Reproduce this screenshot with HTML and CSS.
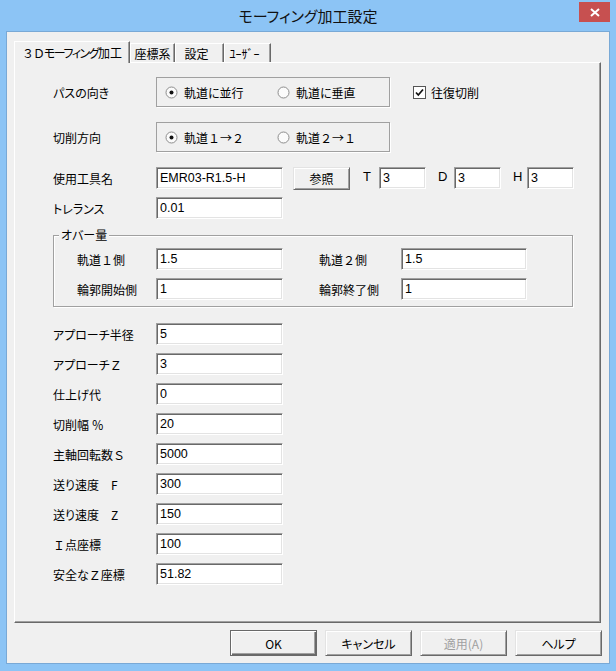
FILE: index.html
```html
<!DOCTYPE html>
<html lang="ja">
<head>
	<meta charset="UTF-8" />
	<title>モーフィング加工設定</title>
	<link rel="stylesheet" href="styles.css">
</head>
<body>
	<div class="window">
		<!-- タイトルバー -->
		<div class="titlebar">
			<span></span>
			<div class="title">モーフィング加工設定</div>
			<div class="close">
				<svg width="10" height="9" viewBox="0 0 10 9"><path d="M1 1L9 8M9 1L1 8" stroke="#fff" stroke-width="2" /></svg>
			</div>
		</div>
		<!-- END of タイトルバー -->
		<div class="client">
			<!-- タブ -->
			<div class="tabs">
				<div class="tab active tab-3d"><span class="fw tight">３Ｄ</span><span class="tighter">モーフィング</span>加工</div>
				<div class="tab tab-coord">座標系</div>
				<div class="tab tab-set">設定</div>
				<div class="tab tab-user">ﾕｰｻﾞｰ</div>
			</div>
			<!-- END of タブ -->
			<div class="panel">
				<div class="row-radio">
					<span class="label">パスの向き</span>
					<div class="radio-box">
						<span class="radio">
							<svg width="13" height="13" viewBox="0 0 13 13"><circle cx="6.5" cy="6.5" r="5.5" fill="#fbfbfb" stroke="#8d8d8d" /><circle cx="6.5" cy="6.5" r="2" fill="#111" /></svg>
							軌道に並行
						</span>
						<span class="radio">
							<svg width="13" height="13" viewBox="0 0 13 13"><circle cx="6.5" cy="6.5" r="5.5" fill="#fbfbfb" stroke="#8d8d8d" /></svg>
							軌道に垂直
						</span>
					</div>
					<span class="check">
						<svg width="13" height="13" viewBox="0 0 13 13"><rect x="0.5" y="0.5" width="12" height="12" fill="#fff" stroke="#555" /><path d="M3 6.5L5.3 9L10 3.5" fill="none" stroke="#111" stroke-width="1.7" /></svg>
						往復切削
					</span>
				</div>
				<div class="row-radio">
					<span class="label">切削方向</span>
					<div class="radio-box">
						<span class="radio">
							<svg width="13" height="13" viewBox="0 0 13 13"><circle cx="6.5" cy="6.5" r="5.5" fill="#fbfbfb" stroke="#8d8d8d" /><circle cx="6.5" cy="6.5" r="2" fill="#111" /></svg>
							<span>軌道<span class="fw">１→２</span></span>
						</span>
						<span class="radio">
							<svg width="13" height="13" viewBox="0 0 13 13"><circle cx="6.5" cy="6.5" r="5.5" fill="#fbfbfb" stroke="#8d8d8d" /></svg>
							<span>軌道<span class="fw">２→１</span></span>
						</span>
					</div>
				</div>

				<div class="row">
					<span class="label">使用工具名</span>
					<input type="text" class="field" value="EMR03-R1.5-H" />
					<button class="btn btn-ref">参照</button>
					<span class="axis">T</span>
					<input type="text" class="field field-s" value="3" />
					<span class="axis axis-d">D</span>
					<input type="text" class="field field-s" value="3" />
					<span class="axis axis-h">H</span>
					<input type="text" class="field field-s" value="3" />
				</div>
				<div class="row">
					<span class="label">トレランス</span>
					<input type="text" class="field" value="0.01" />
				</div>

				<!-- オバー量 -->
				<div class="group">
					<div class="group-title">オバー量</div>
					<div class="row">
						<span class="label-g">軌道<span class="fw">１</span>側</span>
						<input type="text" class="field" value="1.5" />
						<span class="label-g label-g2">軌道<span class="fw">２</span>側</span>
						<input type="text" class="field field-r" value="1.5" />
					</div>
					<div class="row row-last">
						<span class="label-g">輪郭開始側</span>
						<input type="text" class="field" value="1" />
						<span class="label-g label-g2">輪郭終了側</span>
						<input type="text" class="field field-r" value="1" />
					</div>
				</div>
				<!-- END of オバー量 -->

				<div class="row"><span class="label">アプローチ半径</span><input type="text" class="field" value="5" /></div>
				<div class="row"><span class="label">アプローチ<span class="fw">Ｚ</span></span><input type="text" class="field" value="3" /></div>
				<div class="row"><span class="label">仕上げ代</span><input type="text" class="field" value="0" /></div>
				<div class="row"><span class="label">切削幅 <span class="fw">％</span></span><input type="text" class="field" value="20" /></div>
				<div class="row"><span class="label">主軸回転数<span class="fw">Ｓ</span></span><input type="text" class="field" value="5000" /></div>
				<div class="row"><span class="label">送り速度<span class="fw">　</span>F</span><input type="text" class="field" value="300" /></div>
				<div class="row"><span class="label">送り速度<span class="fw">　</span>Z</span><input type="text" class="field" value="150" /></div>
				<div class="row"><span class="label"><span class="fw">Ｉ</span>点座標</span><input type="text" class="field" value="100" /></div>
				<div class="row"><span class="label">安全な<span class="fw">Ｚ</span>座標</span><input type="text" class="field" value="51.82" /></div>
			</div>
			<!-- ボタン -->
			<div class="buttons">
				<button class="btn btn-default">OK</button>
				<button class="btn">キャンセル</button>
				<button class="btn" disabled>適用(A)</button>
				<button class="btn">ヘルプ</button>
			</div>
		</div>
	</div>
</body>
</html>
```

FILE: styles.css
```css
html,
body {
	margin: 0;
	padding: 0;
}

* {
	box-sizing: border-box;
}

body {
	font-family: "Noto Sans CJK JP", "Liberation Sans", sans-serif;
	font-size: 12px;
	font-feature-settings: "palt";
	color: #000;
	background: #8cc4f5;
}

/* 全角英数字はプロポーショナルにしない */
.fw {
	font-feature-settings: normal;
}

.tight {
	letter-spacing: -1px;
}

.tighter {
	letter-spacing: -1.5px;
}

.window {
	width: 616px;
	height: 671px;
	padding: 0 6px 7px;
	background: #8cc4f5;
	display: flex;
	flex-direction: column;
}

/* タイトルバー */
.titlebar {
	height: 31px;
	flex: none;
	display: grid;
	grid-template-columns: 1fr auto 1fr;
	align-items: start;
}

.title {
	line-height: 31px;
	font-size: 15px;
	color: #111;
}

.close {
	justify-self: end;
	width: 31px;
	height: 20px;
	margin-top: 2px;
	background: #c75050;
	display: flex;
	align-items: center;
	justify-content: center;
}

.client {
	flex: 1;
	background: #f0f0f0;
	border: 1px solid #79a9d6;
	padding-top: 9px;
	display: flex;
	flex-direction: column;
}

/* タブ */
.tabs {
	display: flex;
	align-items: flex-end;
	height: 21px;
	margin-left: 7px;
	flex: none;
}

.tab {
	height: 19px;
	display: flex;
	align-items: center;
	justify-content: center;
	border-top: 1px solid #fff;
	border-left: 1px solid #fff;
	border-right: 1px solid #696969;
	box-shadow: inset -1px 0 0 #a0a0a0;
	background: #f0f0f0;
}

.tab.active {
	height: 22px;
	margin-bottom: -1px;
	position: relative;
	z-index: 1;
}

.tab-3d { width: 116px; }
.tab-coord { width: 45px; }
.tab-set { width: 49px; padding-right: 6px; }
.tab-user { width: 47px; padding-right: 6px; }

.panel {
	height: 561px;
	flex: none;
	margin: 0 8px 0 7px;
	border: 1px solid;
	border-color: #fff #696969 #696969 #fff;
	box-shadow: inset -1px -1px 0 #a0a0a0;
	padding: 14px 0 0 38px;
	display: flex;
	flex-direction: column;
}

.label {
	width: 103px;
	flex: none;
}

.row-radio {
	display: flex;
	align-items: center;
	height: 30px;
	margin-bottom: 15px;
}

.radio-box {
	display: flex;
	align-items: center;
	width: 234px;
	height: 30px;
	padding-left: 8px;
	border: 1px solid #a0a0a0;
	box-shadow: 1px 1px 0 #fff;
}

.radio {
	display: flex;
	align-items: center;
	width: 113px;
}

.radio svg {
	margin-right: 6px;
}

.check {
	display: flex;
	align-items: center;
	margin-left: 23px;
}

.check svg {
	margin-right: 5px;
}

.row {
	display: flex;
	align-items: center;
	height: 22px;
	margin-bottom: 8px;
}

.field {
	width: 127px;
	height: 22px;
	margin: 0;
	padding: 0 0 0 3px;
	border: 1px solid;
	border-color: #a0a0a0 #fff #fff #a0a0a0;
	box-shadow: inset 1px 1px 0 #696969, inset -1px -1px 0 #e3e3e3;
	background: #fff;
	font-family: "Liberation Sans", sans-serif;
	font-size: 12.5px;
	color: #000;
	outline: none;
}

.field-s {
	width: 47px;
}

.field-r {
	width: 126px;
}

.axis {
	width: 16px;
	margin-left: 13px;
	margin-top: -3px;
	font-family: "Liberation Sans", sans-serif;
	font-size: 13px;
}

.axis-d {
	margin-left: 12px;
}

.axis-h {
	width: 14px;
	margin-left: 12px;
}

/* ボタン */
.btn {
	height: 26px;
	width: 87px;
	margin: 0;
	padding: 0;
	border: 1px solid;
	border-color: #e3e3e3 #696969 #696969 #e3e3e3;
	box-shadow: inset 1px 1px 0 #fff, inset -1px -1px 0 #a0a0a0;
	background: #f0f0f0;
	font-family: "Noto Sans CJK JP", "Liberation Sans", sans-serif;
	font-size: 12px;
	font-feature-settings: "palt";
	color: #000;
}

.btn:disabled {
	color: #a0a0a0;
}

.btn-default {
	border-color: #696969;
	box-shadow: inset 1px 1px 0 #fff, inset -1px -1px 0 #696969, inset -2px -2px 0 #a0a0a0;
}

.btn-ref {
	width: 57px;
	height: 23px;
	margin-left: 10px;
	align-self: flex-start;
}

/* オバー量 */
.group {
	width: 520px;
	margin: 8px 0 16px;
	padding: 0 0 6px 23px;
	border: 1px solid #a0a0a0;
	box-shadow: inset 1px 1px 0 #fff, 1px 1px 0 #fff;
}

.group-title {
	width: fit-content;
	height: 16px;
	line-height: 16px;
	margin: -9px 0 5px -18px;
	padding: 0 2px;
	background: #f0f0f0;
}

.group .row-last {
	margin-bottom: 0;
}

.label-g {
	width: 79px;
	flex: none;
}

.label-g2 {
	width: 82px;
	margin-left: 36px;
}

.buttons {
	display: flex;
	justify-content: flex-end;
	gap: 8px;
	margin-top: 7px;
	padding-right: 7px;
}
```
